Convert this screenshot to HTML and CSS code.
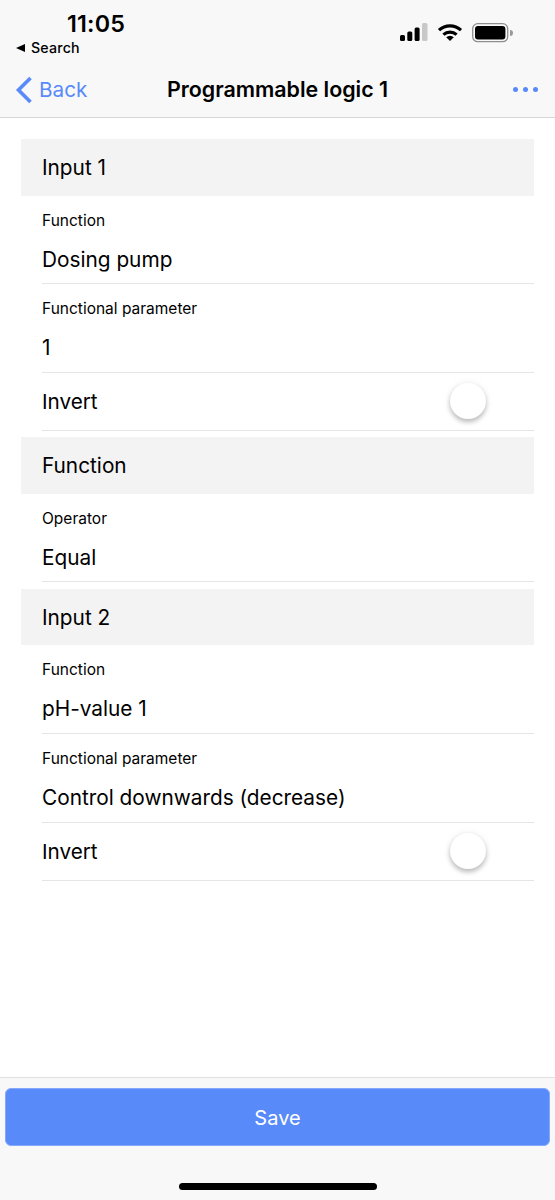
FILE: index.html
```html
<!DOCTYPE html>
<html lang="en">
<head>
<meta charset="utf-8">
<title>Programmable logic 1</title>
<link rel="stylesheet" href="styles.css">
</head>
<body>
<div class="app">
  <header class="header">
    <div class="status">
      <div class="status-left">
        <div class="time">11:05</div>
        <div class="search"><span class="tri"></span>Search</div>
      </div>
      <div class="status-right">
        <svg class="signal" width="28" height="20" viewBox="0 0 28 20"><rect x="0" y="12" width="5" height="6" rx="1.5" fill="#000"/><rect x="7.300" y="8.500" width="5" height="9.500" rx="1.500" fill="#000"/><rect x="14.600" y="4.500" width="5" height="13.500" rx="1.500" fill="#000"/><rect x="22" y="0" width="5.500" height="18" rx="1.500" fill="#c8c8c8"/></svg>
        <svg class="wifi" width="26" height="20" viewBox="0 0 26 20"><path d="M2 7.200 A16 16 0 0 1 24 7.200" fill="none" stroke="#000" stroke-width="3.200"/><path d="M6.400 11.600 A10 10 0 0 1 19.600 11.600" fill="none" stroke="#000" stroke-width="3.200"/><path d="M9.200 14.300 L13 18 L16.800 14.300 A5.500 5.500 0 0 0 9.200 14.300Z" fill="#000"/></svg>
        <svg class="battery" width="42" height="20" viewBox="0 0 42 20"><rect x="0.700" y="0.700" width="35" height="18" rx="5" fill="none" stroke="#8e8e8e" stroke-width="1.300"/><rect x="3" y="3" width="30.400" height="13.400" rx="3" fill="#000"/><path d="M38 7 a3 3 0 0 1 0 6z" fill="#999"/></svg>
      </div>
    </div>
    <nav class="nav">
      <div class="back">
        <svg width="18" height="28" viewBox="0 0 18 28"><path d="M15.500 2 L3.500 14 L15.500 26" fill="none" stroke="#588afa" stroke-width="3.600"/></svg>
        <span>Back</span>
      </div>
      <h1 class="title">Programmable logic 1</h1>
      <div class="dots"><i></i><i></i><i></i></div>
    </nav>
  </header>

  <main class="content">
    <section class="group">
      <h2 class="section">Input 1</h2>
      <div class="field"><div class="label">Function</div><div class="value">Dosing pump</div></div>
      <div class="field"><div class="label">Functional parameter</div><div class="value">1</div></div>
      <div class="toggle-row"><span>Invert</span><span class="knob"></span></div>
    </section>
    <section class="group">
      <h2 class="section">Function</h2>
      <div class="field"><div class="label">Operator</div><div class="value">Equal</div></div>
    </section>
    <section class="group">
      <h2 class="section">Input 2</h2>
      <div class="field"><div class="label">Function</div><div class="value">pH-value 1</div></div>
      <div class="field"><div class="label">Functional parameter</div><div class="value">Control downwards (decrease)</div></div>
      <div class="toggle-row"><span>Invert</span><span class="knob"></span></div>
    </section>
  </main>

  <footer class="footer">
    <button class="save" type="button">Save</button>
    <div class="home"></div>
  </footer>
</div>
</body>
</html>
```
FILE: styles.css
```css
* { box-sizing: border-box; }
html, body { margin: 0; padding: 0; background: #fff; }
body { font-family: Inter, "Liberation Sans", sans-serif; color: #000; }
.app { width: 555px; height: 1200px; display: flex; flex-direction: column; overflow: hidden; }

.header { height: 118px; background: #f8f8f8; border-bottom: 1px solid #d6d6d6; padding-top: 10px; }
.status { height: 52px; display: flex; justify-content: space-between; }
.status-left { padding-left: 16px; }
.time { font-size: 23.300px; line-height: 28px; font-weight: 600; padding-left: 51px; letter-spacing: 0.2px; }
.search { font-size: 14.200px; line-height: 18px; font-weight: 500; margin-top: 1px; display: flex; align-items: center; letter-spacing: 0.2px; }
.tri { width: 0; height: 0; border-style: solid; border-width: 4.500px 9px 4.500px 0; border-color: transparent #000 transparent transparent; margin-right: 6px; }
.status-right { display: flex; align-items: flex-start; padding: 13px 41px 0 0; gap: 9px; }
.status-right svg { display: block; }

.nav { height: 55px; display: flex; align-items: center; position: relative; padding: 0 17px 0 15px; justify-content: space-between; }
.back { display: flex; align-items: center; gap: 6px; color: #588afa; font-size: 20.700px; }
.back svg { display: block; }
.title { position: absolute; left: 0; right: 0; top: 0; margin: 0; line-height: 55px; text-align: center; font-size: 21.400px; font-weight: 600; }
.dots { display: flex; gap: 5px; }
.dots i { width: 5px; height: 5px; border-radius: 50%; background: #588afa; }

.content { flex: 1; padding: 21px 21px 0; display: flex; flex-direction: column; gap: 6.300px; }
.section { margin: 0; height: 56.700px; line-height: 58px; background: #f3f3f3; padding-left: 21px; font-size: 20.800px; font-weight: 400; }
.field { margin-left: 21px; height: 88.600px; border-bottom: 1px solid #e6e6e6; }
.label { font-size: 15.500px; line-height: 18px; padding-top: 16px; height: 34px; }
.value { font-size: 20.800px; line-height: 28px; padding-top: 16px; height: 54px; }
.toggle-row { margin-left: 21px; height: 58px; border-bottom: 1px solid #e6e6e6; display: flex; align-items: center; justify-content: space-between; font-size: 20.700px; padding-right: 48px; }
.knob { width: 36px; height: 36px; border-radius: 50%; background: #fff; box-shadow: 0 3px 5px rgba(0,0,0,.25), 0 0 8px rgba(0,0,0,.06); }

.footer { height: 123px; background: #f8f8f8; border-top: 1px solid #e0e0e0; padding: 10px 5px 0; display: flex; flex-direction: column; align-items: center; }
.save { width: 100%; height: 58px; background: #588afa; border: 1px solid #84a8fb; border-radius: 6px; color: #fff; font-family: inherit; font-size: 20px; font-weight: 400; padding: 1px 0 0; }
.home { width: 198px; height: 7px; border-radius: 4px; background: #000; margin-top: 37px; }
```
